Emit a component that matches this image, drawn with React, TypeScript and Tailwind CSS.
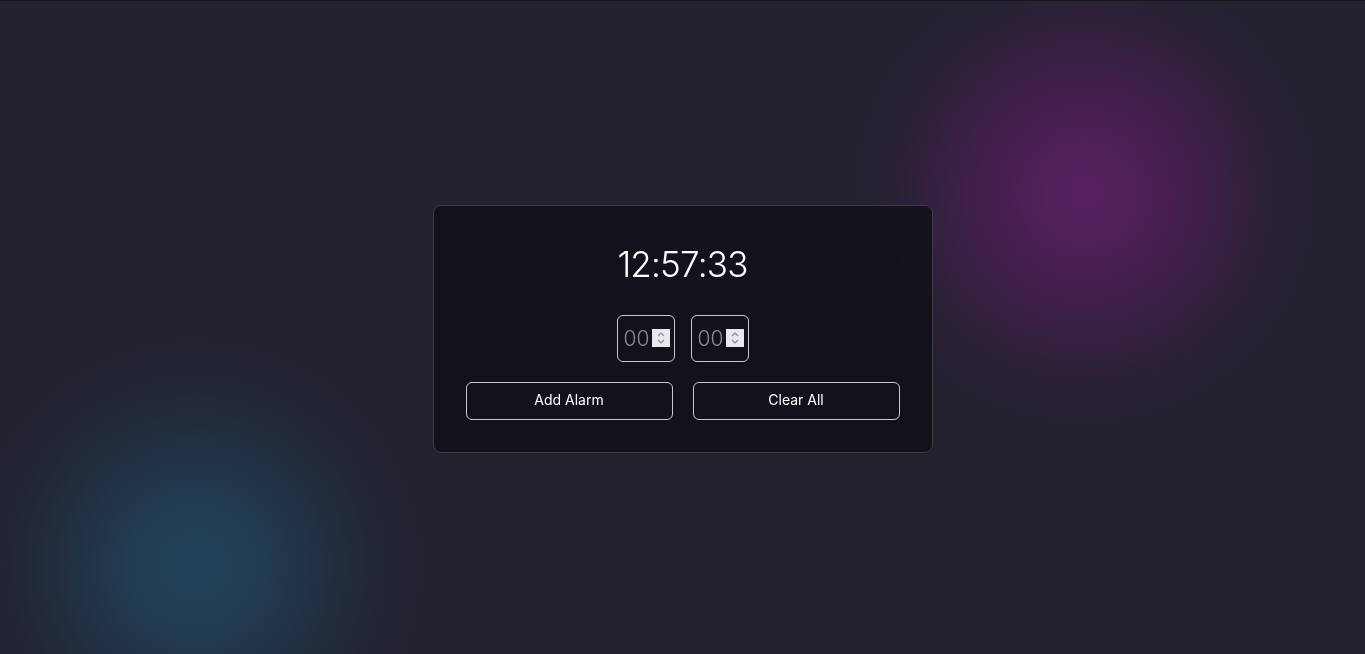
import React from "react";

function Spinner() {
  return (
    <div className="w-[18px] h-[18px] bg-[#e9e9ed] flex items-center justify-center">
      <svg width="10" height="14" viewBox="0 0 10 14" fill="none" stroke="#8a8a90" strokeWidth="1.2">
        <path d="M2 5 L5 2 L8 5" />
        <path d="M2 9 L5 12 L8 9" />
      </svg>
    </div>
  );
}

function NumBox() {
  return (
    <div className="w-[58px] h-[47px] rounded-[6px] border border-[#c9c9cf] flex items-center justify-end pr-[4px] gap-[2px]">
      <span className="text-[21px] text-[#8a8a94] font-light leading-none">00</span>
      <Spinner />
    </div>
  );
}

export default function App() {
  return (
    <div
      className="relative w-full h-[654px] overflow-hidden bg-[#22212e] border-t border-[#16161a] flex items-center justify-center"
      style={{ fontFamily: "Inter, 'Open Sans', sans-serif" }}
    >
      <div className="absolute left-[845px] top-[-48px] w-[480px] h-[480px] rounded-full bg-[radial-gradient(circle,#581f61_0%,rgba(85,31,94,0.85)_18%,rgba(80,31,90,0.55)_38%,rgba(70,30,80,0.22)_55%,rgba(34,33,46,0)_70%)]" />
      <div className="absolute left-[-45px] top-[325px] w-[480px] h-[480px] rounded-full bg-[radial-gradient(circle,#21425a_0%,rgba(33,65,88,0.85)_18%,rgba(33,60,82,0.55)_38%,rgba(34,50,70,0.22)_55%,rgba(34,33,46,0)_70%)]" />

      <div className="relative w-[500px] h-[248px] mt-[2px] rounded-[8px] border border-[#3d3b4a] bg-[#121118]/90 backdrop-blur-xl px-[32px] pt-[30px] pb-[32px] flex flex-col items-center">
        <div className="text-[35px] font-light text-white leading-[56px] tracking-[-0.8px]">12:57:33</div>
        <div className="mt-[23px] flex gap-[16px]">
          <NumBox />
          <NumBox />
        </div>
        <div className="mt-[20px] w-full flex gap-[20px]">
          <button className="flex-1 h-[38px] pb-[2px] rounded-[6px] border border-[#c9c9cf] text-white text-[14px]">Add Alarm</button>
          <button className="flex-1 h-[38px] pb-[2px] rounded-[6px] border border-[#c9c9cf] text-white text-[14px]">Clear All</button>
        </div>
      </div>
    </div>
  );
}
